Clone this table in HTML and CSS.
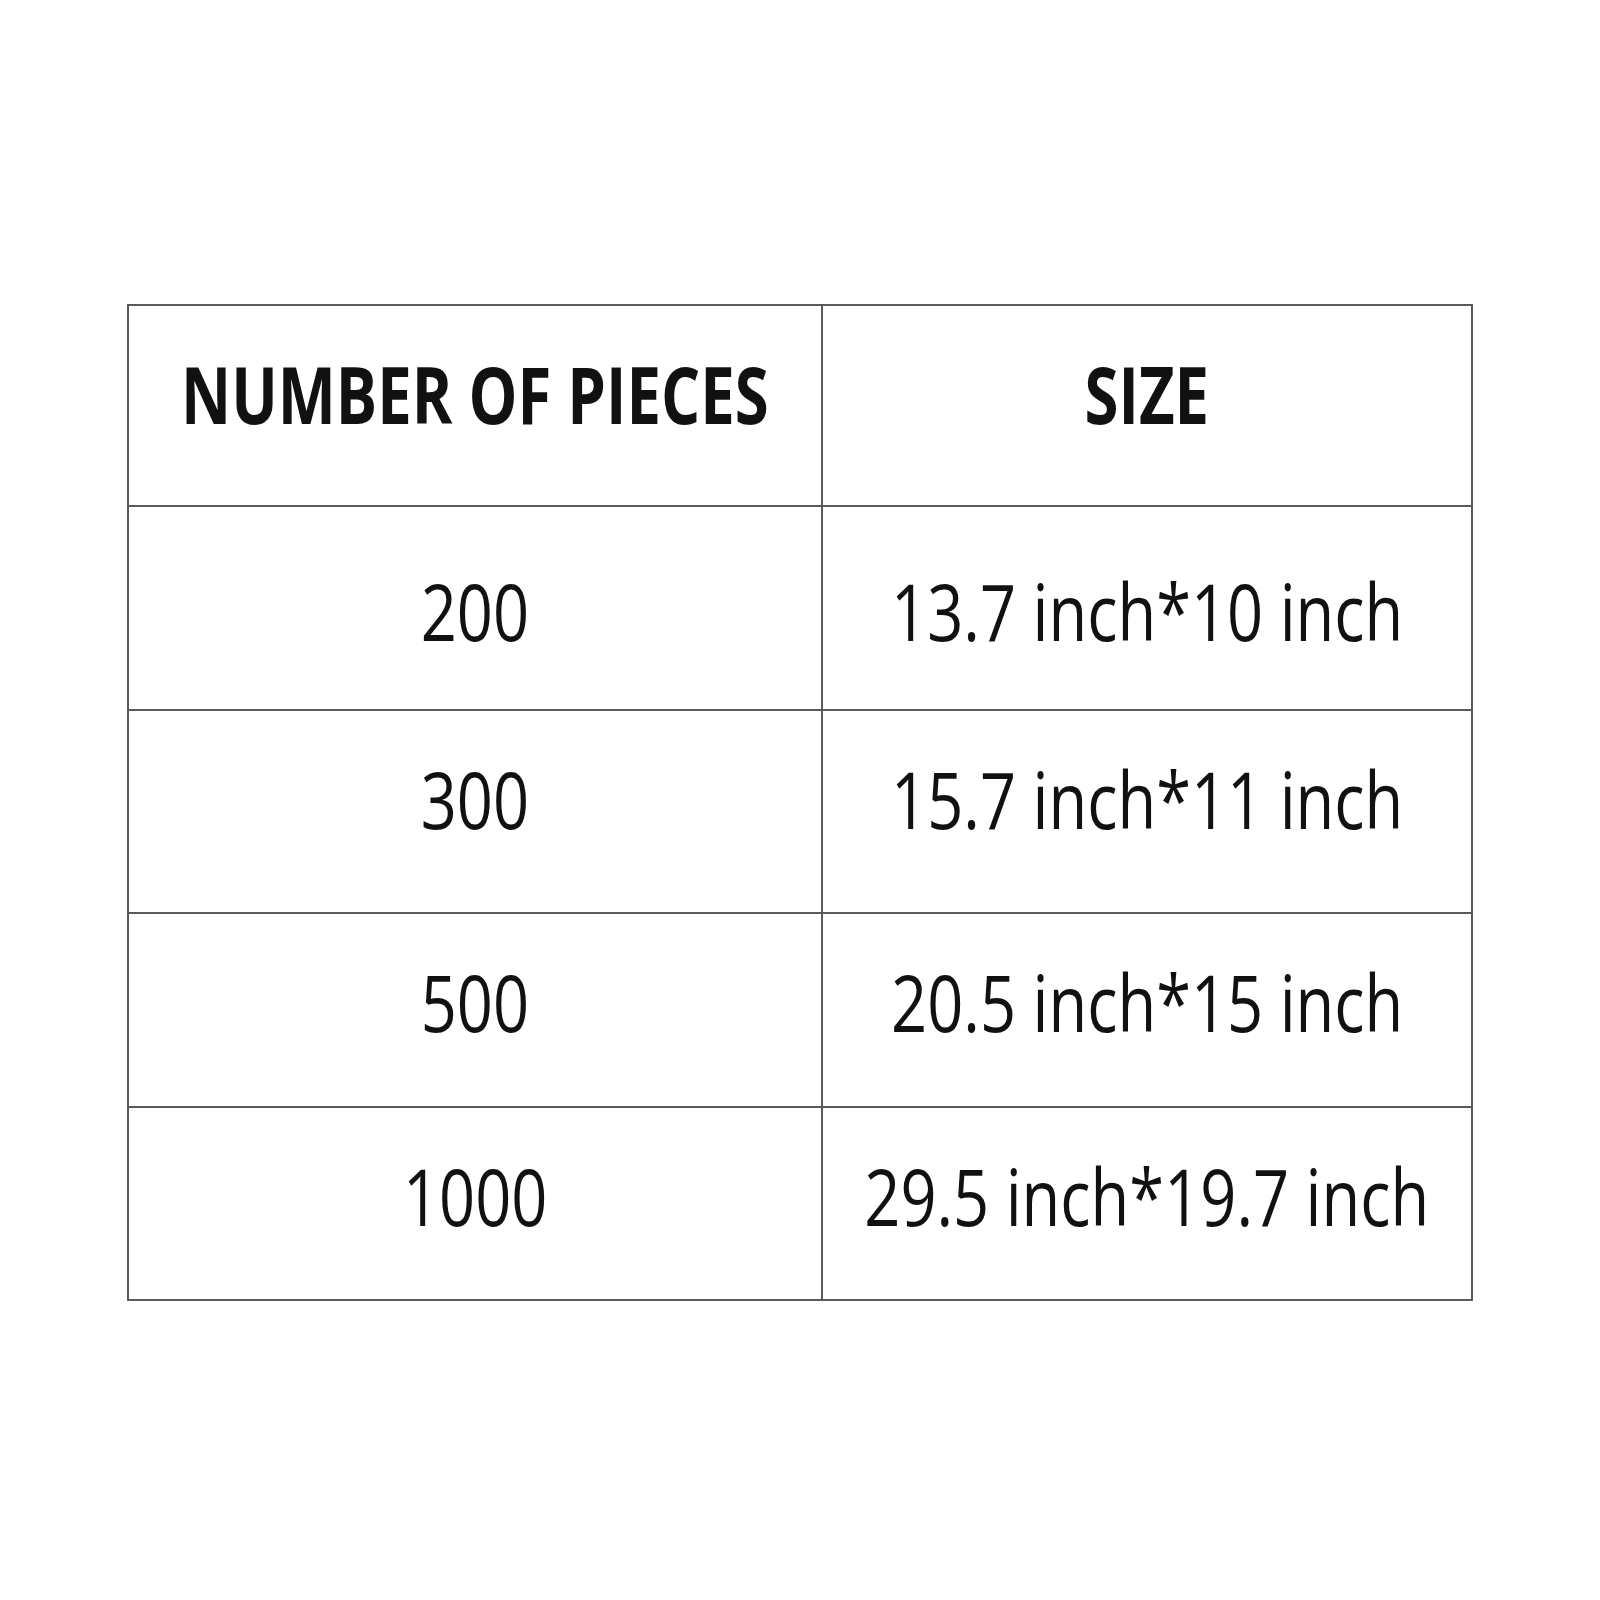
FILE: index.html
```html
<!DOCTYPE html>
<html lang="en">
<head>
<meta charset="utf-8">
<title>Puzzle sizes</title>
<link rel="stylesheet" href="styles.css">
</head>
<body>
<div class="page">
  <div class="table">
    <div class="cell head"><span class="txt bold">NUMBER OF PIECES</span></div>
    <div class="cell head"><span class="txt bold">SIZE</span></div>

    <div class="cell r1"><span class="txt">200</span></div>
    <div class="cell r1"><span class="txt">13.7 inch*10 inch</span></div>

    <div class="cell r2"><span class="txt">300</span></div>
    <div class="cell r2"><span class="txt">15.7 inch*11 inch</span></div>

    <div class="cell r3"><span class="txt">500</span></div>
    <div class="cell r3"><span class="txt">20.5 inch*15 inch</span></div>

    <div class="cell r4"><span class="txt">1000</span></div>
    <div class="cell r4"><span class="txt">29.5 inch*19.7 inch</span></div>
  </div>
</div>
</body>
</html>
```

FILE: styles.css
```css
html, body {
  margin: 0;
  padding: 0;
  background: #ffffff;
}

.page {
  width: 1600px;
  height: 1600px;
  padding: 304px 0 0 127px;
  box-sizing: border-box;
}

.table {
  display: grid;
  grid-template-columns: 692px 648px;
  grid-template-rows: 199px 202px 201px 192px 191px;
  gap: 2px;
  padding: 2px;
  background: #5a5a5a;
  width: max-content;
}

.cell {
  background: #ffffff;
  display: flex;
  align-items: center;
  justify-content: center;
  box-sizing: border-box;
  font-family: "Open Sans", "Liberation Sans", sans-serif;
  color: #111111;
  white-space: nowrap;
}

.txt {
  display: inline-block;
  font-size: 78px;
  line-height: 1;
  transform: scaleX(0.81);
  transform-origin: center;
}

.bold {
  font-size: 78px;
  font-weight: 700;
  transform: scaleX(0.79);
}

.head { padding-bottom: 24px; }
.r1 { padding-top: 5px; }
.r2 { padding-bottom: 26px; }
.r3 { padding-bottom: 16px; }
.r4 { padding-bottom: 16px; }
```
